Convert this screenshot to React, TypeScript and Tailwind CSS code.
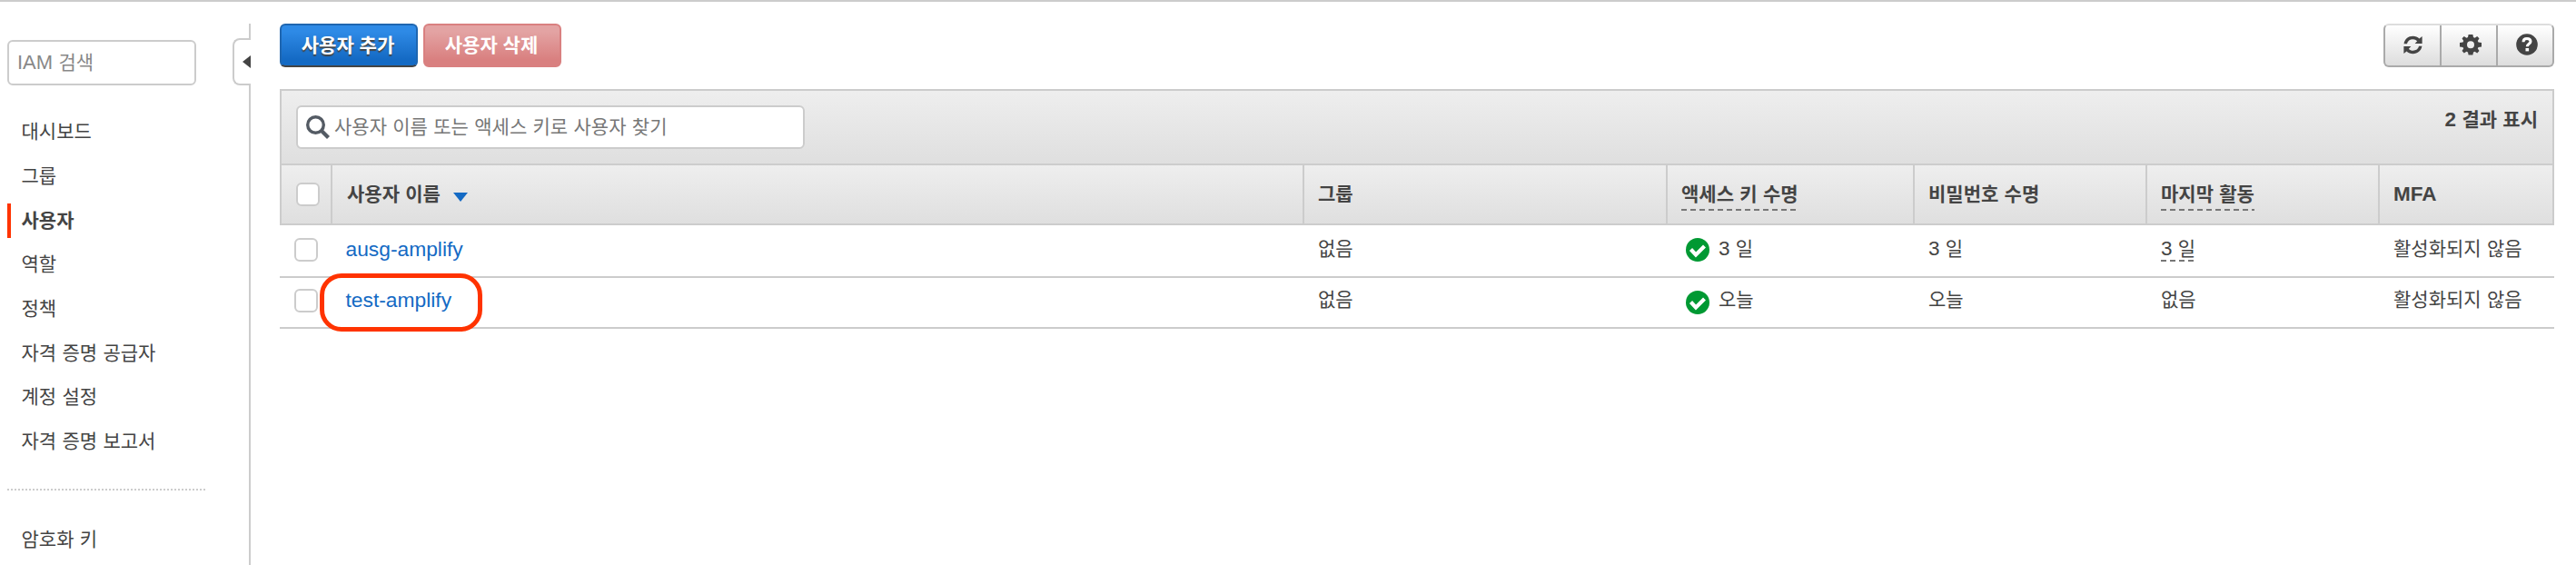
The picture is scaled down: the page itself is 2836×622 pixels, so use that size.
import type { ReactNode } from "react";

const NAV = ["대시보드", "그룹", "사용자", "역할", "정책", "자격 증명 공급자", "계정 설정", "자격 증명 보고서"];

const COLS = "grid grid-cols-[58px_1068px_400px_272px_256px_256px_194px]";

function RefreshIcon() {
  return (
    <svg viewBox="0 0 22 22" className="h-[21px] w-[21px]" fill="#444">
      <path d="M0.6 9.600C1.300 4.400 5.600 0.800 11 0.800c2.900 0 5.300 1 7.300 2.800L21.600 1v8.400h-8.400l2.700-2.900C14.500 5.100 12.900 4.400 11 4.400c-3.500 0-6.200 2-6.900 5.200z" />
      <path d="M21.400 12.400c-.7 5.200-5 8.800-10.400 8.800-2.900 0-5.300-1-7.300-2.800L.4 21v-8.400h8.400l-2.700 2.900c1.400 1.400 3 2.100 4.900 2.100 3.500 0 6.200-2 6.900-5.200z" />
    </svg>
  );
}

function GearIcon() {
  return (
    <svg viewBox="0 0 24 24" className="h-6 w-6" fill="#444">
      <path
        fillRule="evenodd"
        d="M9.600 1h4.800l.6 3 1.600.7L19.200 3 21.500 5.300l-1.700 2.600.7 1.600 3.500.4v4.500l-3.500.5-.7 1.600 1.700 2.600-2.300 2.300-2.600-1.700-1.600.7-.6 3H9.600l-.6-3-1.600-.7-2.600 1.700-2.300-2.300 1.700-2.600-.7-1.600L0 14.400V9.900l3.500-.4.7-1.600-1.700-2.600L4.800 3l2.600 1.700L9 4zM12 8.200a4 4 0 1 0 0 8 4 4 0 0 0 0-8z"
      />
    </svg>
  );
}

function HelpIcon() {
  return (
    <svg viewBox="0 0 24 24" className="h-6 w-6">
      <circle cx="12" cy="12" r="11.800" fill="#444" />
      <path d="M8 9.200c0-2.500 1.800-3.700 4-3.700s4 1.200 4 3.200c0 2.600-3.700 2.500-3.700 5.500" fill="none" stroke="#fff" strokeWidth="3" />
      <rect x="10.500" y="16" width="3.600" height="3.400" fill="#fff" />
    </svg>
  );
}

function CheckIcon() {
  return (
    <svg viewBox="0 0 26 26" className="h-[26px] w-[26px] shrink-0">
      <circle cx="13" cy="13" r="13" fill="#093" />
      <path d="M5.500 12.500l5.500 6 9.500-9.500" fill="none" stroke="#fff" strokeWidth="4.200" />
    </svg>
  );
}

function Checkbox() {
  return <span className="block h-[26px] w-[26px] rounded-[6px] border-2 border-[#ccc] bg-white" />;
}

function Dashed({ children, tall }: { children: ReactNode; tall?: boolean }) {
  return (
    <span className={tall ? "relative py-1" : "relative"}>
      {children}
      <span className="absolute inset-x-0 bottom-0 h-[2px] bg-[repeating-linear-gradient(90deg,#777_0_6px,transparent_6px_10px)]" />
    </span>
  );
}

function Days({ value }: { value: number }) {
  return (
    <span>
      <span className="text-[22.500px]">{value}</span> 일
    </span>
  );
}

function HeadCell({ children }: { children: ReactNode }) {
  return <div className="flex items-center border-l-2 border-[#ccc] pl-[15px]">{children}</div>;
}

function Cell({ children }: { children: ReactNode }) {
  return <div className="flex items-start pl-[17px]">{children}</div>;
}

function NavItem({ label, active }: { label: string; active?: boolean }) {
  return (
    <div className="flex h-[48.700px] items-center">
      <span className={active ? "h-[38px] w-1 bg-[#ff3300]" : "h-[38px] w-1"} />
      <span className={active ? "pl-[11.500px] font-bold" : "pl-[11.500px]"}>{label}</span>
    </div>
  );
}

export default function App() {
  return (
    <div className="flex h-[622px] w-[2836px] overflow-hidden border-t-2 border-[#ccc] bg-white font-['Liberation_Sans','Noto_Sans_CJK_KR',sans-serif] text-[21px] leading-[28px] whitespace-nowrap text-[#444] [word-spacing:0.5px]">
      <aside className="flex w-[256px] shrink-0 flex-col pt-[42px] pl-2">
        <div className="flex h-[50px] w-[208px] items-center rounded-[6px] border-2 border-[#ccc] pl-[9px] text-[#888]">
          <span><span className="text-[22px]">IAM</span> 검색</span>
        </div>
        <nav className="mt-[27px]">
          {NAV.map((n) => (
            <NavItem key={n} label={n} active={n === "사용자"} />
          ))}
        </nav>
        <div className="mt-[27px] h-[2px] w-[219px] bg-[repeating-linear-gradient(90deg,#ccc_0_2px,transparent_2px_4px)]" />
        <div className="mt-[30px]">
          <NavItem label="암호화 키" />
        </div>
      </aside>

      <div className="flex w-5 shrink-0 flex-col items-end pt-6">
        <div className="h-4 w-[2px] bg-[#ccc]" />
        <div className="flex h-[52px] w-5 items-center justify-end rounded-l-[8px] border-2 border-r-0 border-[#ccc]">
          <svg viewBox="0 0 9 14" className="h-[14px] w-[9px]" fill="#444">
            <path d="M9 0v14L0 7z" />
          </svg>
        </div>
        <div className="w-[2px] grow bg-[#ccc]" />
      </div>

      <main className="ml-8 w-[2504px] shrink-0 pt-6">
        <div className="flex justify-between">
          <div className="flex gap-[6px] font-bold text-white">
            <button className="h-12 w-[152px] rounded-[6px] border-2 border-[#1f66b0] border-b-[#444] bg-linear-to-b from-[#2e8ae6] from-15% to-[#146ac4] to-85% pr-[2px] [text-shadow:0_2px_1px_#444]">
              사용자 추가
            </button>
            <button className="h-12 w-[152px] rounded-[6px] border-2 border-[#d98080] bg-linear-to-b from-[#e3a3a3] from-15% to-[#d98080] to-85% pr-[2px]">
              사용자 삭제
            </button>
          </div>
          <div className="flex h-12 w-[188px] rounded-[6px] border-2 border-[#aaa] border-t-[#ddd] bg-linear-to-b from-white to-[#ddd]">
            <button className="flex w-[60px] items-center justify-center pb-[2px]"><RefreshIcon /></button>
            <button className="flex w-[62px] items-center justify-center border-l-2 border-[#aaa] pb-[2px] pl-1"><GearIcon /></button>
            <button className="flex w-[62px] items-center justify-center border-l-2 border-[#aaa] pb-[2px] pl-1"><HelpIcon /></button>
          </div>
        </div>

        <section className="mt-6">
          <div className="flex h-[82px] justify-between border-2 border-b-0 border-[#ccc] bg-linear-to-b from-[#eee] to-[#dfdfdf] pt-4 pr-[16px] pl-4">
            <div className="flex h-12 w-[560px] items-center rounded-[6px] border-2 border-[#ccc] bg-white pl-[9px] text-[#777]">
              <svg viewBox="0 0 26 26" className="mr-[5px] h-[26px] w-[26px]" fill="none" stroke="#545b64">
                <circle cx="10.500" cy="10.500" r="8.800" strokeWidth="3.400" />
                <path d="M17 17l7.500 7.500" strokeWidth="4.200" />
              </svg>
              사용자 이름 또는 액세스 키로 사용자 찾기
            </div>
            <div className="pt-[2px] font-bold"><span className="text-[22.500px]">2</span> 결과 표시</div>
          </div>

          <div className={`${COLS} h-[68px] border-y-2 border-[#ccc] bg-linear-to-b from-[#eee] to-[#dfdfdf] font-bold`}>
            <div className="flex items-center border-l-2 border-[#ccc] pl-4">
              <Checkbox />
            </div>
            <div className="-ml-[2px] flex items-center border-l-2 border-[#ccc] pl-4">
              사용자 이름
              <svg viewBox="0 0 16 10" className="mt-[5px] ml-[14px] h-[10px] w-4" fill="#146ac4">
                <path d="M0 0h16L8 10z" />
              </svg>
            </div>
            <HeadCell>그룹</HeadCell>
            <HeadCell><Dashed tall>액세스 키 수명</Dashed></HeadCell>
            <HeadCell>비밀번호 수명</HeadCell>
            <HeadCell><Dashed tall>마지막 활동</Dashed></HeadCell>
            <div className="flex items-center border-x-2 border-[#ccc] pl-[15px] text-[22.500px]">MFA</div>
          </div>

          <div className={`${COLS} h-[58px] border-b-2 border-[#ccc] pt-3`}>
            <div className="pt-[2px] pl-4"><Checkbox /></div>
            <div className="pl-[14.500px] text-[22.800px] text-[#146ac4]">ausg-amplify</div>
            <Cell>없음</Cell>
            <Cell><span className="mt-[2px] mr-[10px] ml-[5px]"><CheckIcon /></span><Days value={3} /></Cell>
            <Cell><Days value={3} /></Cell>
            <Cell><Dashed><Days value={3} /></Dashed></Cell>
            <Cell>활성화되지 않음</Cell>
          </div>
          <div className={`${COLS} h-[56px] border-b-2 border-[#ccc] pt-[10px]`}>
            <div className="pt-[2px] pl-4"><Checkbox /></div>
            <div className="relative pl-[14.500px] text-[22.800px] text-[#146ac4]">
              test-amplify
              <span className="absolute -top-[15px] -left-[14px] h-[64px] w-[179px] rounded-[24px] border-[5px] border-[#ff3300]" />
            </div>
            <Cell>없음</Cell>
            <Cell><span className="mt-1 mr-[10px] ml-[5px]"><CheckIcon /></span>오늘</Cell>
            <Cell>오늘</Cell>
            <Cell>없음</Cell>
            <Cell>활성화되지 않음</Cell>
          </div>
        </section>
      </main>
    </div>
  );
}
